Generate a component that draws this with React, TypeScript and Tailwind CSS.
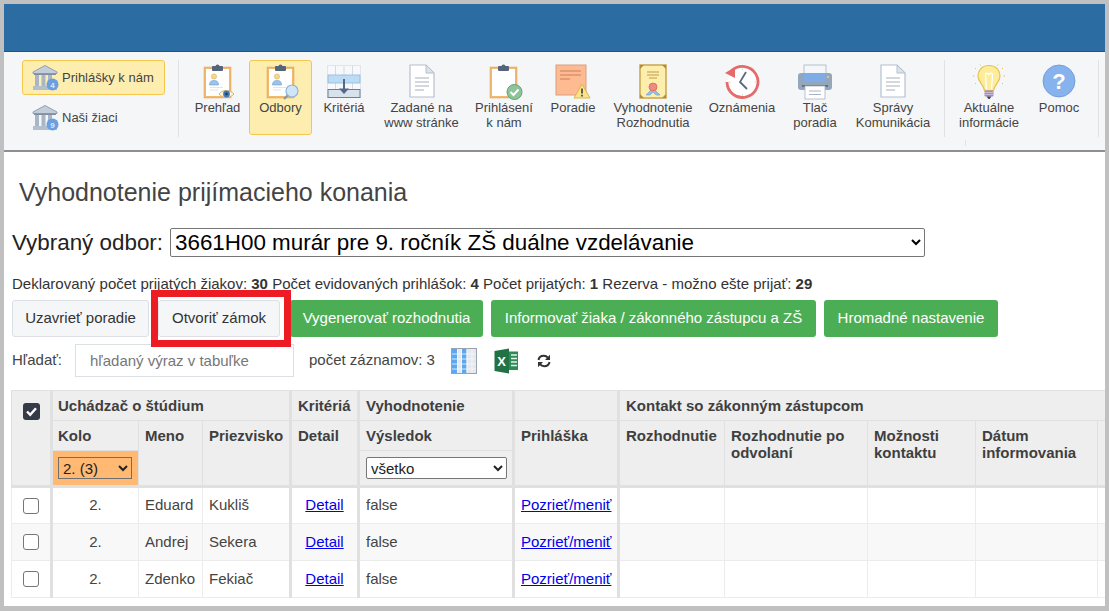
import type { ReactNode } from "react";

const font = "font-['Liberation_Sans',Arial,sans-serif]";

function BankIcon({ n }: { n: string }) {
  return (
    <svg width="28" height="28" viewBox="0 0 28 28">
      <path d="M1 8 L13 1.500 L25 8 L25 9.500 L1 9.500 Z" fill="#c5cdd8" stroke="#8fa0b5" strokeWidth="1" />
      <rect x="3" y="10" width="4" height="12" fill="#a9b6c6" />
      <rect x="9.500" y="10" width="4" height="12" fill="#a9b6c6" />
      <rect x="16" y="10" width="4" height="12" fill="#a9b6c6" />
      <rect x="2" y="9.500" width="22" height="1.500" fill="#7f90a6" />
      <rect x="1" y="22" width="24" height="4" fill="#b4bfcd" />
      <circle cx="20.500" cy="20.500" r="6" fill="#6c9fe0" />
      <text x="20.500" y="23.500" textAnchor="middle" fontSize="8" fontWeight="700" fill="#dbe8fa" fontFamily="Liberation Sans">{n}</text>
    </svg>
  );
}

function Clipboard({ children }: { children?: ReactNode }) {
  return (
    <svg width="34" height="36" viewBox="0 0 34 36" className="overflow-visible">
      <rect x="3" y="3" width="27" height="31" fill="#f2b86c" stroke="#d9a25e" strokeWidth="0.500" />
      <rect x="5" y="5" width="23" height="27" fill="#fff" />
      <rect x="11" y="2" width="11" height="5" rx="1" fill="#55647a" />
      <circle cx="16.500" cy="2.500" r="2" fill="#55647a" />
      <g transform="translate(3 0)">{children}</g>
    </svg>
  );
}

function Person() {
  return (
    <g>
      <circle cx="10" cy="12.500" r="2.600" fill="#f4d890" stroke="#d8b060" strokeWidth="0.600" />
      <path d="M5.500 21 C5.500 17 8 16.500 10 16.500 C12 16.500 14.500 17 14.500 21 Z" fill="#9cc4ea" stroke="#6d9cd0" strokeWidth="0.600" />
      <path d="M6 23.500 H19 M6 26 H14" stroke="#dfe4ea" strokeWidth="1" />
    </g>
  );
}

function ClipEye() {
  return (
    <Clipboard>
      <Person />
      <path d="M15 30 C18 25.500 26 25.500 30 30 C26 34.500 18 34.500 15 30 Z" fill="#fdf6df" stroke="#d8b060" strokeWidth="1" />
      <circle cx="22.500" cy="30" r="3.400" fill="#3c77b8" />
      <circle cx="22.500" cy="30" r="1.300" fill="#1e3c60" />
    </Clipboard>
  );
}

function ClipSearch() {
  return (
    <Clipboard>
      <Person />
      <path d="M21 31 L17 35" stroke="#8c99aa" strokeWidth="2.400" />
      <circle cx="25" cy="27" r="6" fill="#cfe5f8" stroke="#8fb4d8" strokeWidth="1.200" />
    </Clipboard>
  );
}

function ClipCheck() {
  return (
    <Clipboard>
      <circle cx="24.500" cy="28" r="7.500" fill="#8dc49a" stroke="#5fa272" strokeWidth="1" />
      <path d="M20.500 28 L23.500 31 L28.500 25.500" fill="none" stroke="#fff" strokeWidth="2" />
    </Clipboard>
  );
}

function TableArrow() {
  return (
    <svg width="34" height="34" viewBox="0 0 34 34">
      <rect x="0.500" y="1.500" width="33" height="32" fill="#f6f8fb" stroke="#dfe5ec" />
      <path d="M8.500 2 V33 M17 2 V33 M25.500 2 V33" stroke="#d4dbe4" strokeWidth="1" />
      <rect x="1" y="11" width="32" height="8" fill="#bcdcf5" stroke="#8fb6da" strokeWidth="0.800" />
      <rect x="1" y="25.500" width="32" height="8" fill="#d7e2ec" stroke="#6d7f95" strokeWidth="1" />
      <path d="M17 15 V27" stroke="#55688a" strokeWidth="2" />
      <path d="M12 24.500 H22 L17 30 Z" fill="#55688a" />
    </svg>
  );
}

function DocIcon() {
  return (
    <svg width="26" height="34" viewBox="0 0 26 34">
      <path d="M1 1 H17 L25 9 V33 H1 Z" fill="#fff" stroke="#b5c0cf" strokeWidth="1.200" />
      <path d="M17 1 V9 H25 Z" fill="#dde3ea" stroke="#b5c0cf" strokeWidth="1" />
      <path d="M6 14 H20 M6 18 H20 M6 22 H20 M6 26 H15" stroke="#a8b2bf" strokeWidth="1.200" />
    </svg>
  );
}

function NoteWarn() {
  return (
    <svg width="36" height="36" viewBox="0 0 36 36">
      <rect x="1" y="1" width="30" height="30" fill="#feba91" stroke="#d8a080" strokeWidth="1" />
      <path d="M5 7 H26 M5 11 H26 M5 15 H15" stroke="#c97f55" strokeWidth="1" />
      <path d="M27 20 L35 34 H19 Z" fill="#fbe28a" stroke="#d8b850" strokeWidth="1" />
      <path d="M27 24.500 V29.500 M27 30.800 V32.500" stroke="#3c3c3c" strokeWidth="1.600" />
    </svg>
  );
}

function Certificate() {
  return (
    <svg width="28" height="36" viewBox="0 0 28 36">
      <rect x="1" y="1" width="26" height="33" fill="#fdeeae" stroke="#caa64c" strokeWidth="1.500" />
      <path d="M1 1 H5 L1 5 Z M27 1 H23 L27 5 Z M1 34 H5 L1 30 Z M27 34 H23 L27 30 Z" fill="#b08c3c" />
      <path d="M8 8 H20 M8 11 H20 M10 14 H18" stroke="#c09c48" strokeWidth="1" />
      <path d="M14 24 L7 31 L11 31 L14 28 L17 31 L21 31 Z" fill="#8fc0ec" stroke="#6d9cd0" strokeWidth="0.600" />
      <circle cx="14" cy="23" r="4" fill="#ee8a80" stroke="#d86a60" strokeWidth="0.800" />
    </svg>
  );
}

function ClockBack() {
  return (
    <svg width="36" height="36" viewBox="0 0 36 36">
      <path d="M7.500 7 A15.500 15.500 0 1 1 3 18" fill="#fff" stroke="#e56a6a" strokeWidth="2.800" />
      <path d="M1 9 L11 3 L11 14 Z" fill="#e56a6a" />
      <path d="M22 8 L16 18 L23 25" fill="none" stroke="#5a6b82" strokeWidth="1.800" />
      <path d="M18.500 4.500 V6 M18.500 30 V31.500 M5 18 H6.500 M30.500 18 H32" stroke="#c9d0da" strokeWidth="1" />
    </svg>
  );
}

function Printer() {
  return (
    <svg width="36" height="36" viewBox="0 0 36 36">
      <rect x="7" y="1" width="22" height="10" fill="#f4f6f9" stroke="#a8b4c4" strokeWidth="0.800" />
      <rect x="1" y="9" width="34" height="17" rx="3" fill="#94a6ba" />
      <rect x="7" y="9" width="22" height="9" rx="1.500" fill="#7fabe6" />
      <circle cx="31" cy="13" r="0.900" fill="#f6d878" />
      <rect x="5" y="21" width="26" height="2" fill="#5e7088" />
      <rect x="8" y="22" width="20" height="13" fill="#fff" stroke="#a8b4c4" strokeWidth="0.800" />
      <path d="M12 27 H24 M12 30.500 H24" stroke="#a8b4c4" strokeWidth="1" />
    </svg>
  );
}

function Bulb() {
  return (
    <svg width="36" height="36" viewBox="0 0 36 36">
      <path d="M18 1.500 C10 1.500 7 7.500 7 12 C7 18 12.500 20 13.500 26.500 H22.500 C23.500 20 29 18 29 12 C29 7.500 26 1.500 18 1.500 Z" fill="#fdec9a" stroke="#e5c158" strokeWidth="1.200" />
      <path d="M15.500 25 L14.500 11 C14.500 8 17.500 9 18 11 C18.500 9 21.500 8 21.500 11 L20.500 25" fill="none" stroke="#fff" strokeWidth="1.300" />
      <rect x="13.500" y="26.500" width="9" height="6" rx="1" fill="#a08cc0" />
      <path d="M13.500 28.500 H22.500 M13.500 30.500 H22.500" stroke="#d8cfe6" strokeWidth="0.700" />
      <path d="M15.500 32.500 H20.500 L18.500 35 H17.500 Z" fill="#3f3f4f" />
      <path d="M2 12 H3.500 M32.500 12 H34 M4 4 L5 5 M32 4 L31 5 M4 20 L5 19 M32 20 L31 19 M9 0.500 L9.500 1.500 M27 0.500 L26.500 1.500" stroke="#e5c158" strokeWidth="1" />
    </svg>
  );
}

function HelpIcon() {
  return (
    <svg width="34" height="34" viewBox="0 0 34 34">
      <circle cx="17" cy="17" r="16" fill="#86b2ee" stroke="#6b96d2" strokeWidth="0.800" />
      <text x="17" y="25" textAnchor="middle" fontSize="22" fontWeight="700" fill="#fff" fontFamily="Liberation Sans">?</text>
    </svg>
  );
}

function ColumnsIcon() {
  return (
    <svg width="26" height="26" viewBox="0 0 26 26">
      <rect x="0.500" y="0.500" width="25" height="25" fill="#e4e8ee" stroke="#9aa3ad" />
      <rect x="1" y="1" width="5" height="24" fill="#5aa8f2" />
      <rect x="11" y="1" width="4.500" height="24" fill="#5aa8f2" />
      <path d="M1 6 H25 M1 11 H25 M1 16 H25 M1 21 H25 M6.500 1 V25 M10.500 1 V25 M16 1 V25 M21 1 V25" stroke="#f6f8fa" strokeWidth="0.800" />
    </svg>
  );
}

function ExcelIcon() {
  return (
    <svg width="26" height="26" viewBox="0 0 26 26">
      <rect x="14" y="3.500" width="10" height="18.500" fill="#2f8a5a" />
      <path d="M17 7 H23 M17 10.500 H23 M17 14 H23 M17 17.500 H23" stroke="#e8f3ec" strokeWidth="1.300" />
      <path d="M0.500 3 L15 0.500 V25.500 L0.500 23 Z" fill="#217346" />
      <text x="7.500" y="18" textAnchor="middle" fontSize="13" fontWeight="700" fill="#fff" fontFamily="Liberation Sans">X</text>
    </svg>
  );
}

function RefreshIcon() {
  return (
    <svg width="14" height="14" viewBox="0 0 14 14">
      <path d="M1.500 6 C2 3 4.500 1.800 6.800 1.800 C8.800 1.800 10.200 2.800 11 3.800" fill="none" stroke="#333" strokeWidth="2" />
      <path d="M13 0.800 V6 H8 Z" fill="#333" />
      <path d="M12.500 8 C12 11 9.500 12.200 7.200 12.200 C5.200 12.200 3.800 11.200 3 10.200" fill="none" stroke="#333" strokeWidth="2" />
      <path d="M1 13.200 V8 H6 Z" fill="#333" />
    </svg>
  );
}

const toolItems: { label: string[]; width: string; icon: ReactNode; active?: boolean }[] = [
  { label: ["Prehľad"], width: "w-[63px]", icon: <ClipEye /> },
  { label: ["Odbory"], width: "w-[63px]", icon: <ClipSearch />, active: true },
  { label: ["Kritériá"], width: "w-[64px]", icon: <TableArrow /> },
  { label: ["Zadané na", "www stránke"], width: "w-[91px]", icon: <DocIcon /> },
  { label: ["Prihlásení", "k nám"], width: "w-[74px]", icon: <ClipCheck /> },
  { label: ["Poradie"], width: "w-[64px]", icon: <NoteWarn /> },
  { label: ["Vyhodnotenie", "Rozhodnutia"], width: "w-[96px]", icon: <Certificate /> },
  { label: ["Oznámenia"], width: "w-[82px]", icon: <ClockBack /> },
  { label: ["Tlač", "poradia"], width: "w-[64px]", icon: <Printer /> },
  { label: ["Správy", "Komunikácia"], width: "w-[92px]", icon: <DocIcon /> },
];

function ToolItem({ label, width, icon, active }: { label: string[]; width: string; icon: ReactNode; active?: boolean }) {
  return (
    <div
      className={`${width} h-[75px] flex flex-col items-center rounded-[3px] border text-[13px] leading-[15px] text-[#444] ${
        active ? "bg-[#fdeeb0] border-[#f5c84c]" : "border-transparent"
      }`}
    >
      <div className="h-[36px] mt-[3px] flex items-start justify-center">{icon}</div>
      {label.map((l) => (
        <span key={l} className="whitespace-nowrap">{l}</span>
      ))}
    </div>
  );
}

function Separator() {
  return <div className="w-px h-[77px] bg-[#dfe2e6]" />;
}

function Toolbar() {
  return (
    <div className="relative h-[100px] bg-[#f5f6f8] border-b-2 border-[#8c8f93] flex items-start pt-[8px]">
      <div className="ml-[18px] w-[143px] flex flex-col text-[13px] text-[#444]">
        <div className="h-[35px] flex items-center pl-[9px] gap-[2px] rounded-[3px] border border-[#f5c84c] bg-[#fdeeb0]">
          <BankIcon n="4" />
          <span className="whitespace-nowrap">Prihlášky k nám</span>
        </div>
        <div className="h-[46px] flex items-center pl-[10px] gap-[2px]">
          <BankIcon n="9" />
          <span className="whitespace-nowrap">Naši žiaci</span>
        </div>
      </div>
      <div className="ml-[13px]">
        <Separator />
      </div>
      <div className="ml-[7px] flex">
        {toolItems.map((t) => (
          <ToolItem key={t.label[0] + t.width} {...t} />
        ))}
      </div>
      <div className="ml-[5px]">
        <Separator />
      </div>
      <div className="ml-[5px] flex">
        <ToolItem label={["Aktuálne", "informácie"]} width="w-[78px]" icon={<Bulb />} />
        <ToolItem label={["Pomoc"]} width="w-[62px]" icon={<HelpIcon />} />
      </div>
      <div className="ml-[8px]">
        <Separator />
      </div>
      <div className="absolute left-[961px] top-[88px] w-px h-[6px] bg-[#dfe2e6]" />
    </div>
  );
}

const th = "border border-[#e0e0e0] bg-[#eeeeee] text-left align-top font-bold text-[15px] leading-[17px] text-[#3f3f3f] px-[6px] pt-[6px]";
const td = "border border-[#ececec] text-[15px] text-[#444] px-[6px] align-middle";
const thick = "border-l-[3px] border-l-[#e0e0e0]";

const rows = [
  { first: "Eduard", last: "Kukliš" },
  { first: "Andrej", last: "Sekera" },
  { first: "Zdenko", last: "Fekiač" },
];

function Box() {
  return <span className="block w-[16px] h-[16px] mx-auto rounded-[3px] border border-[#767676] bg-white" />;
}

function ResultsTable() {
  return (
    <div className="mt-[13px] ml-[7px] overflow-hidden">
      <table className="table-fixed border-collapse w-[1110px]">
        <colgroup>
          <col className="w-[40px]" />
          <col className="w-[87px]" />
          <col className="w-[64px]" />
          <col className="w-[88px]" />
          <col className="w-[68px]" />
          <col className="w-[155px]" />
          <col className="w-[105px]" />
          <col className="w-[106px]" />
          <col className="w-[143px]" />
          <col className="w-[108px]" />
          <col className="w-[122px]" />
          <col className="w-[24px]" />
        </colgroup>
        <thead>
          <tr className="h-[30px]">
            <th rowSpan={3} className="border border-[#e0e0e0] bg-[#eeeeee] align-top pt-[12px]">
              <span className="mx-auto flex items-center justify-center w-[17px] h-[17px] rounded-[3px] bg-[#343a46]">
                <svg width="13" height="13" viewBox="0 0 13 13">
                  <path d="M2 6.500 L5.200 9.800 L11 3.200" fill="none" stroke="#fff" strokeWidth="2.400" />
                </svg>
              </span>
            </th>
            <th colSpan={3} className={`${th} ${thick} pl-[5px]`}>Uchádzač o štúdium</th>
            <th className={`${th} ${thick}`}>Kritériá</th>
            <th className={`${th} ${thick}`}>Vyhodnotenie</th>
            <th className={`${th} ${thick}`} />
            <th colSpan={5} className={`${th} ${thick}`}>Kontakt so zákonným zástupcom</th>
          </tr>
          <tr className="h-[30px]">
            <th className={`${th} ${thick} pl-[5px]`}>Kolo</th>
            <th rowSpan={2} className={th}>Meno</th>
            <th rowSpan={2} className={th}>Priezvisko</th>
            <th rowSpan={2} className={`${th} ${thick}`}>Detail</th>
            <th className={`${th} ${thick}`}>Výsledok</th>
            <th rowSpan={2} className={`${th} ${thick}`}>Prihláška</th>
            <th rowSpan={2} className={`${th} ${thick}`}>Rozhodnutie</th>
            <th rowSpan={2} className={th}>Rozhodnutie po odvolaní</th>
            <th rowSpan={2} className={th}>Možnosti kontaktu</th>
            <th rowSpan={2} className={th}>Dátum informovania</th>
            <th rowSpan={2} className={th} />
          </tr>
          <tr className="h-[36px] border-b-[3px] border-b-[#e0e0e0]">
            <th className={`border border-[#e0e0e0] ${thick} bg-[#ffb973] px-[5px] font-normal`}>
              <select defaultValue="2" className="block w-[74px] h-[22px] text-[15px] text-[#222] border border-[#6f6f6f] bg-transparent">
                <option value="2">2. (3)</option>
              </select>
            </th>
            <th className={`border border-[#e0e0e0] ${thick} bg-[#eeeeee] px-[6px] font-normal`}>
              <select defaultValue="all" className="block w-[141px] h-[22px] text-[15px] text-[#222] border border-[#767676] rounded-[2px] bg-white">
                <option value="all">všetko</option>
              </select>
            </th>
          </tr>
        </thead>
        <tbody>
          {rows.map((r, i) => (
            <tr key={r.first} className={`h-[37px] ${i === 1 ? "bg-[#f8f8f8]" : "bg-white"}`}>
              <td className={td}><Box /></td>
              <td className={`${td} ${thick} text-center`}>2.</td>
              <td className={td}>{r.first}</td>
              <td className={td}>{r.last}</td>
              <td className={`${td} ${thick} text-center`}>
                <a href="#" className="text-[#0000ee] underline">Detail</a>
              </td>
              <td className={`${td} ${thick}`}>false</td>
              <td className={`${td} ${thick} whitespace-nowrap`}>
                <a href="#" className="text-[#0000ee] underline">Pozrieť/meniť</a>
              </td>
              <td className={`${td} ${thick}`} />
              <td className={td} />
              <td className={td} />
              <td className={td} />
              <td className={td} />
            </tr>
          ))}
        </tbody>
      </table>
    </div>
  );
}

export default function App() {
  return (
    <div className={`${font} w-[1109px] h-[611px] bg-[#c0c0c0] pt-[4px] pl-[4px] pr-[4px] pb-[5px] overflow-hidden`}>
      <div className="relative h-full bg-white overflow-hidden">
        <div className="h-[48px] bg-[#2b6ca3] border-b border-[#1f5580]" />
        <Toolbar />

        <h1 className="mt-[26px] ml-[15px] text-[25px] leading-[28px] font-normal text-[#444]">
          Vyhodnotenie prijímacieho konania
        </h1>

        <div className="mt-[22px] ml-[8px] flex items-center gap-[8px] text-[22.4px] leading-[29px] text-[#222]">
          <span className="w-[150px] whitespace-nowrap">Vybraný odbor:</span>
          <select defaultValue="a" className="w-[755px] h-[29px] text-[22.4px] text-black bg-white border border-[#767676] rounded-[2px]">
            <option value="a">3661H00 murár pre 9. ročník ZŠ duálne vzdelávanie</option>
          </select>
        </div>

        <p className="mt-[18px] ml-[8px] text-[15px] leading-[18px] text-[#333] whitespace-nowrap">
          Deklarovaný počet prijatých žiakov: <b>30</b> Počet evidovaných prihlášok: <b>4</b> Počet prijatých: <b>1</b> Rezerva - možno ešte prijať: <b>29</b>
        </p>

        <div className="mt-[7px] ml-[8px] flex text-[15px]">
          <button className="w-[137px] h-[37px] rounded-[3px] border border-[#dcdfe4] bg-[#f5f6f8] text-[#333]">Uzavrieť poradie</button>
          <button className="ml-[9px] w-[122px] h-[37px] rounded-[3px] border border-[#dcdfe4] bg-[#f5f6f8] text-[#333]">Otvoriť zámok</button>
          <button className="ml-[10px] w-[193px] h-[37px] rounded-[3px] bg-[#4cae54] text-white">Vygenerovať rozhodnutia</button>
          <button className="ml-[8px] w-[325px] h-[37px] rounded-[3px] bg-[#4cae54] text-white">Informovať žiaka / zákonného zástupcu a ZŠ</button>
          <button className="ml-[8px] w-[174px] h-[37px] rounded-[3px] bg-[#4cae54] text-white">Hromadné nastavenie</button>
        </div>

        <div className="mt-[7px] ml-[8px] flex items-center h-[33px] text-[15px] text-[#444]">
          <span className="w-[63px] whitespace-nowrap">Hľadať:</span>
          <input
            placeholder="hľadaný výraz v tabuľke"
            className="w-[219px] h-[33px] border border-[#dcdfe4] px-[14px] text-[15px] placeholder:text-[#777] outline-none"
          />
          <span className="ml-[15px] whitespace-nowrap">počet záznamov: 3</span>
          <span className="ml-[16px] flex"><ColumnsIcon /></span>
          <span className="ml-[17px] flex"><ExcelIcon /></span>
          <span className="ml-[17px] flex"><RefreshIcon /></span>
        </div>

        <ResultsTable />

        {/* red highlight drawn over the buttons */}
        <div className="absolute left-[147px] top-[286px] w-[140px] h-[57px] border-[7px] border-[#ed1c24]" />
      </div>
    </div>
  );
}
